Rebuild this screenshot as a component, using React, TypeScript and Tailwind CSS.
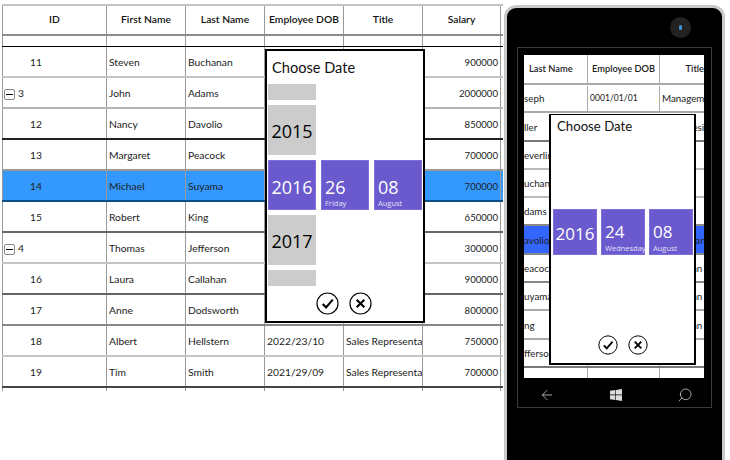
import { ArrowLeft, Search } from "lucide-react";

const font = "font-['Lato',sans-serif]";
const tileFont = "font-['Open_Sans',sans-serif]";

type Row = { id: string; group?: boolean; first: string; last: string; dob?: string; title?: string; salary: string; border: string; sel?: boolean };

const rows: Row[] = [
  { id: "11", first: "Steven", last: "Buchanan", salary: "900000", border: "border-[#c4c4c4]" },
  { id: "3", group: true, first: "John", last: "Adams", salary: "2000000", border: "border-[#b5b5b5]" },
  { id: "12", first: "Nancy", last: "Davolio", salary: "850000", border: "border-[#222222]" },
  { id: "13", first: "Margaret", last: "Peacock", salary: "700000", border: "border-[#999999]" },
  { id: "14", first: "Michael", last: "Suyama", salary: "700000", border: "border-[#0b4f86]", sel: true },
  { id: "15", first: "Robert", last: "King", salary: "650000", border: "border-[#666666]" },
  { id: "4", group: true, first: "Thomas", last: "Jefferson", salary: "300000", border: "border-[#c4c4c4]" },
  { id: "16", first: "Laura", last: "Callahan", salary: "900000", border: "border-[#666666]" },
  { id: "17", first: "Anne", last: "Dodsworth", salary: "800000", border: "border-[#888888]" },
  { id: "18", first: "Albert", last: "Hellstern", dob: "2022/23/10", title: "Sales Representative", salary: "750000", border: "border-[#c4c4c4]" },
  { id: "19", first: "Tim", last: "Smith", dob: "2021/29/09", title: "Sales Representative", salary: "700000", border: "border-[#444444]" },
];

const cols = "grid grid-cols-[104px_79px_79px_79px_79px_79px]";
const cell = "border-l border-[#999999] overflow-hidden whitespace-nowrap flex items-center";

function Minus() {
  return (
    <span className="w-[11px] h-[11px] border border-[#888888] rounded-[2px] flex items-center justify-center mr-[3px]">
      <span className="w-[7px] h-[1px] bg-black" />
    </span>
  );
}

function DataRow({ r }: { r: Row }) {
  return (
    <div className={`${cols} h-[31px] border-b-2 ${r.border} ${r.sel ? "bg-[#3399ff]" : ""} text-[10.3px] text-[#222222]`}>
      <div className={`${cell} pt-[3px] ${r.group ? "pl-[1px]" : "pl-[27px]"}`}>
        {r.group && <Minus />}
        {r.id}
      </div>
      <div className={`${cell} pt-[3px] pl-[2px]`}>{r.first}</div>
      <div className={`${cell} pt-[3px] pl-[2px]`}>{r.last}</div>
      <div className={`${cell} pt-[3px] pl-[2px]`}>{r.dob}</div>
      <div className={`${cell} pt-[3px] pl-[2px]`}>{r.title}</div>
      <div className={`${cell} pt-[3px] justify-end pr-[2px] border-r text-[9.6px]`}>{r.salary}</div>
    </div>
  );
}

function Tile({ big, sub, size = "l" }: { big: string; sub?: string; size?: "l" | "s" }) {
  return (
    <div className={`${size === "l" ? "w-[48px] h-[50px]" : "w-[44px] h-[46px]"} ${tileFont} bg-[#6a5acd] border border-[#7d6fdc] text-white flex flex-col ${sub ? "justify-end pl-[3px] pb-[1px]" : "items-center justify-center pt-[3px]"}`}>
      <span className={`${size === "l" ? "text-[18px]" : "text-[17px]"} leading-[22px]`}>{big}</span>
      {sub && <span className="text-[7.5px] leading-[10px] text-[#e4e0fa]">{sub}</span>}
    </div>
  );
}

function GreyTile({ text }: { text: string }) {
  return <div className={`${tileFont} w-[48px] h-[50px] pt-[3px] bg-[#cccccc] flex items-center justify-center text-[18px] text-black`}>{text}</div>;
}

function RoundBtn({ x, size }: { x?: boolean; size: number }) {
  return (
    <svg width={size} height={size} viewBox="0 0 24 24" fill="none" stroke="black">
      <circle cx="12" cy="12" r="11" strokeWidth="1.2" />
      {x ? <path d="M8 8l8 8M16 8l-8 8" strokeWidth="2.2" /> : <path d="M7 12.5l3.5 3.5 7-8" strokeWidth="2.2" />}
    </svg>
  );
}

function DesktopPicker() {
  return (
    <div className="absolute left-[263px] top-[45px] w-[160px] h-[274px] bg-white border-2 border-black flex flex-col">
      <div className="text-[14.6px] leading-[22px] pl-[5px] pt-[6px] h-[33px] text-[#111111]">Choose Date</div>
      <div className="flex items-center gap-[5px] pl-[1px] h-[202px]">
        <div className="flex flex-col gap-[5px]">
          <div className="w-[48px] h-[16px] bg-[#cccccc]" />
          <GreyTile text="2015" />
          <Tile big="2016" />
          <GreyTile text="2017" />
          <div className="w-[48px] h-[16px] bg-[#cccccc]" />
        </div>
        <Tile big="26" sub="Friday" />
        <Tile big="08" sub="August" />
      </div>
      <div className="flex justify-center gap-[10px] pt-[6px] pr-[2px]">
        <RoundBtn size={23} />
        <RoundBtn x size={23} />
      </div>
    </div>
  );
}

const phoneCols = "grid grid-cols-[63px_72px_45px]";
const phoneCell = "border-l border-[#aaaaaa] overflow-hidden whitespace-nowrap flex items-center";

const phoneRows = [
  { last: "seph", dob: "0001/01/01", title: "Management", b: "border-[#aaaaaa]" },
  { last: "ller", title: "Vice President", b: "border-[#777777]" },
  { last: "everling", title: "", b: "border-[#bbbbbb]" },
  { last: "uchanan", title: "", b: "border-[#bbbbbb]" },
  { last: "dams", title: "Sales", b: "border-[#888888]" },
  { last: "avolio", title: "Sales Manager", b: "border-[#888888]", sel: true },
  { last: "eacock", title: "Salesman", b: "border-[#888888]" },
  { last: "uyama", title: "Salesman", b: "border-[#aaaaaa]" },
  { last: "ng", title: "Salesman", b: "border-[#aaaaaa]" },
  { last: "fferson", title: "", b: "border-[#777777]" },
];

function Phone() {
  return (
    <div className="relative ml-[1px] mt-[5px] w-[221px] h-[455px] bg-black border-[3px] border-b-0 border-[#c9c9c9] rounded-t-[12px] flex flex-col items-center">
      <div className="absolute right-[31px] top-[9px] w-[21px] h-[21px] rounded-full bg-[#222222] flex items-center justify-center">
        <span className="w-[3px] h-[5px] rounded-full bg-[#3f8fd0]" />
      </div>
      <div className="mt-[39px] w-[195px] h-[361px] border border-[#3a3a3a] flex flex-col pt-[7px] px-[6px]">
        <div className="relative w-[180px] h-[323px] bg-white overflow-hidden text-[9.8px] text-[#222222]">
          <div className={`${phoneCols} h-[30px] border-b-2 border-[#aaaaaa] font-semibold text-[9.3px]`}>
            <div className="flex items-center pl-[5px] overflow-hidden whitespace-nowrap">Last Name</div>
            <div className={`${phoneCell} justify-center`}>Employee DOB</div>
            <div className={`${phoneCell} justify-end`}>Title</div>
          </div>
          {phoneRows.map((r) => (
            <div key={r.last} className={`${phoneCols} h-[28.3px] pt-[1px] border-b-2 ${r.b} ${r.sel ? "bg-[#3366ff]" : ""}`}>
              <div className="flex items-center overflow-hidden whitespace-nowrap">{r.last}</div>
              <div className={`${phoneCell} pl-[2px] text-[8.6px]`}>{r.dob}</div>
              <div className={`${phoneCell} pl-[2px]`}>{r.title}</div>
            </div>
          ))}
          <div className={`${phoneCols} h-[10px]`}>
            <div />
            <div className={phoneCell} />
            <div className={phoneCell} />
          </div>
          <div className="absolute left-[25px] top-[59px] w-[147px] h-[251px] bg-white border-2 border-black border-t flex flex-col">
            <div className="text-[13.2px] leading-[18px] pl-[6px] pt-[2px] h-[94px] text-[#111111]">Choose Date</div>
            <div className="flex gap-[4px] pl-[2px]">
              <Tile big="2016" size="s" />
              <Tile big="24" sub="Wednesday" size="s" />
              <Tile big="08" sub="August" size="s" />
            </div>
            <div className="flex justify-center gap-[10px] pt-[80px]">
              <RoundBtn size={20} />
              <RoundBtn x size={20} />
            </div>
          </div>
        </div>
        <div className="flex-1 flex items-center justify-between pl-[15px] pr-[12px] pt-[4px] text-[#cccccc]">
          <ArrowLeft size={16} strokeWidth={1.2} />
          <svg width="12" height="12" viewBox="0 0 12 12" fill="#dddddd">
            <path d="M0 1.8L5.4 1v4.6H0zM6 .9L12 0v5.6H6zM0 6.3h5.4V11L0 10.2zM6 6.3h6V12l-6-.9z" />
          </svg>
          <Search size={16} strokeWidth={1.2} className="-scale-x-100" />
        </div>
      </div>
    </div>
  );
}

export default function App() {
  return (
    <div className={`${font} w-[730px] h-[460px] bg-white flex overflow-hidden`}>
      <div className="relative ml-[2px] mt-[4px] w-[501px] h-[386px] text-[#111111]">
        <div className={`${cols} h-[32px] border-t-2 border-t-[#c4c4c4] border-b-2 border-b-[#8c8c8c] text-[10.3px] font-semibold`}>
          <div className={`${cell} justify-center`}>ID</div>
          <div className={`${cell} justify-center`}>First Name</div>
          <div className={`${cell} justify-center`}>Last Name</div>
          <div className={`${cell} justify-center`}>Employee DOB</div>
          <div className={`${cell} justify-center`}>Title</div>
          <div className={`${cell} justify-center border-r`}>Salary</div>
        </div>
        <div className={`${cols} h-[11px] border-b border-black`}>
          <div className={cell} />
          <div className={cell} />
          <div className={cell} />
          <div className={cell} />
          <div className={cell} />
          <div className={`${cell} border-r`} />
        </div>
        {rows.map((r) => (
          <DataRow key={r.id} r={r} />
        ))}
        <div className={`${cols} h-[3px]`}>
          <div className={cell} />
          <div className={cell} />
          <div className={cell} />
          <div className={cell} />
          <div className={cell} />
          <div className={`${cell} border-r`} />
        </div>
        <DesktopPicker />
      </div>
      <Phone />
    </div>
  );
}
